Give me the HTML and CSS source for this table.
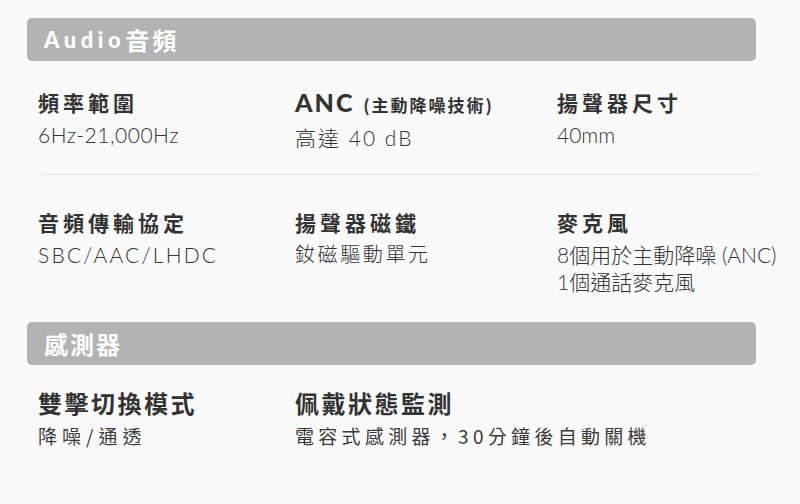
FILE: index.html
```html
<!DOCTYPE html>
<html lang="zh-Hant">
<head>
<meta charset="utf-8">
<link rel="stylesheet" href="styles.css">
</head>
<body>
<div class="page">
  <div class="bar"><span class="bar-latin">Audio</span><span class="bar-cjk">音頻</span></div>
  <div class="grid row1">
    <div class="item"><div class="title">頻率範圍</div><div class="val sp-hz">6Hz-21,000Hz</div></div>
    <div class="item"><div class="title"><span class="anc">ANC</span> <span class="small">(主動降噪技術)</span></div><div class="val sp2">高達 40 dB</div></div>
    <div class="item"><div class="title">揚聲器尺寸</div><div class="val">40mm</div></div>
  </div>
  <div class="divider"></div>
  <div class="grid row2">
    <div class="item"><div class="title">音頻傳輸協定</div><div class="val sp-sbc">SBC/AAC/LHDC</div></div>
    <div class="item"><div class="title">揚聲器磁鐵</div><div class="val sp-mag">釹磁驅動單元</div></div>
    <div class="item"><div class="title">麥克風</div><div class="val">8個用於主動降噪 (ANC)<br>1個通話麥克風</div></div>
  </div>
  <div class="bar bar2"><span class="bar-cjk2">感測器</span></div>
  <div class="grid row3">
    <div class="item"><div class="title t3">雙擊切換模式</div><div class="val v3 v3a">降噪/通透</div></div>
    <div class="item"><div class="title t3">佩戴狀態監測</div><div class="val v3 v3b">電容式感測器，30分鐘後自動關機</div></div>
  </div>
</div>
</body>
</html>
```
FILE: styles.css
```css
* { box-sizing: border-box; }
html, body { margin: 0; padding: 0; }
body {
  background: #fafafa;
  font-family: "Lato", "Noto Sans CJK TC", sans-serif;
  color: #333;
  width: 800px;
  height: 504px;
  overflow: hidden;
}
.page { padding-top: 18px; }
.bar {
  margin: 0 44px 0 27px;
  height: 43px;
  border-radius: 5px;
  background: #b3b3b3;
  color: #fff;
  font-family: "Noto Sans CJK TC", sans-serif;
  font-weight: 700;
  padding-left: 17px;
  display: flex;
  align-items: center;
}
.bar-latin {
  font-family: "Lato", sans-serif;
  font-weight: 900;
  font-size: 22px;
  letter-spacing: 4.5px;
}
.bar-cjk { font-size: 24px; letter-spacing: 3px; }
.bar-cjk2 { font-size: 24px; letter-spacing: 2px; }
.grid {
  display: grid;
  grid-template-columns: 257px 262px 1fr;
  padding-left: 38px;
}
.row1 { padding-top: 26px; }
.row2 { padding-top: 32px; }
.row3 { padding-top: 23px; grid-template-columns: 257px 1fr; }
.title {
  font-family: "Noto Sans CJK TC", sans-serif;
  font-weight: 700;
  font-size: 21px;
  letter-spacing: 4px;
  line-height: 30px;
  color: #333;
}
.anc {
  font-family: "Lato", sans-serif;
  font-weight: 900;
  font-size: 25px;
  letter-spacing: 2px;
}
.small { font-size: 17px; letter-spacing: 2px; }
.val {
  font-family: "Lato", "Noto Sans CJK TC", sans-serif;
  font-weight: 300;
  font-size: 21px;
  line-height: 27px;
  color: #333;
  margin-top: 4px;
}
.sp-hz { letter-spacing: 0.5px; }
.sp2 { letter-spacing: 2px; }
.sp-sbc { letter-spacing: 2.2px; }
.sp-mag { font-size: 20px; letter-spacing: 2.6px; }
.divider {
  height: 1px;
  background: #e2e2e2;
  margin: 23px 43px 0 43px;
}
.bar2 { margin-top: 27px; }
.t3 { font-size: 24px; letter-spacing: 2.5px; }
.v3 { font-family: "Noto Sans CJK TC", sans-serif; font-weight: 400; font-size: 19px; color: #3a3a3a; margin-top: 4px; }
.v3a { letter-spacing: 5px; }
.v3b { letter-spacing: 4.3px; }
```
